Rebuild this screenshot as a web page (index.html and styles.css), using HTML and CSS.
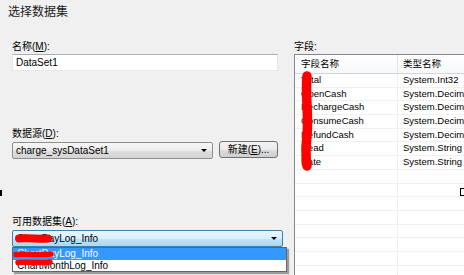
FILE: index.html
```html
<!DOCTYPE html>
<html lang="zh-CN">
<head>
    <meta charset="UTF-8">
    <title>选择数据集</title>
    <link rel="stylesheet" href="styles.css">
</head>
<body>
    <div class="page">
        <div class="title">选择数据集</div>
        <div class="main">
            <div class="left">
                <div class="label">名称(<u>M</u>):</div>
                <div class="textbox">DataSet1</div>

                <div class="label gap">数据源(<u>D</u>):</div>
                <div class="row">
                    <div class="combo src"><span>charge_sysDataSet1</span><i class="arrow"></i></div>
                    <div class="btn">新建(<u>E</u>)...</div>
                </div>

                <div class="label gap">可用数据集(<u>A</u>):</div>
                <div class="combo open">
                    <span>ChartDayLog_Info</span><i class="arrow"></i>
                    <ul class="droplist">
                        <li class="sel">ChartDayLog_Info</li>
                        <li>ChartMonthLog_Info</li>
                    </ul>
                </div>
            </div>

            <div class="right">
                <div class="label">字段:</div>
                <div class="grid">
                    <div class="gh"><div>字段名称</div><div>类型名称</div></div>
                    <div class="gr"><div>Total</div><div>System.Int32</div></div>
                    <div class="gr"><div>OpenCash</div><div>System.Decimal</div></div>
                    <div class="gr"><div>RechargeCash</div><div>System.Decimal</div></div>
                    <div class="gr"><div>ConsumeCash</div><div>System.Decimal</div></div>
                    <div class="gr"><div>RefundCash</div><div>System.Decimal</div></div>
                    <div class="gr"><div>Head</div><div>System.String</div></div>
                    <div class="gr"><div>Date</div><div>System.String</div></div>
                    <div class="gr"><div></div><div></div></div>
                    <div class="gr"><div></div><div></div></div>
                    <div class="gr"><div></div><div></div></div>
                    <div class="gr"><div></div><div></div></div>
                    <div class="gr"><div></div><div></div></div>
                    <div class="gr"><div></div><div></div></div>
                    <div class="gr"><div></div><div></div></div>
                    <div class="gr"><div></div><div></div></div>
                </div>
            </div>
        </div>

        <!-- red marker strokes over the names -->
        <svg class="scribble" width="464" height="275" viewBox="0 0 464 275">
            <g fill="none" stroke="#ff0000" stroke-linecap="round">
                <path d="M307 76 C305 95 309 115 307 135 S306 160 307 166" stroke-width="9.5"/>
                <path d="M19 238.5 C30 237.5 40 239.5 48 238.5" stroke-width="8"/>
                <path d="M16 254.5 C28 253.5 40 255.5 51 254" stroke-width="5.5"/>
                <path d="M18 262.5 C30 261.5 40 263.5 50 262" stroke-width="5.5"/>
            </g>
        </svg>
        <i class="mark-l"></i>
        <i class="mark-r"></i>
    </div>
</body>
</html>
```

FILE: styles.css
```css
body {
    margin: 0;
    background: #f0f0f0;
    font-family: 'Liberation Sans', 'Noto Sans CJK SC', sans-serif;
    color: #000;
    overflow: hidden;
}
.page {
    position: relative;
    width: 464px;
    height: 275px;
    overflow: hidden;
}
.title {
    padding: 4px 0 0 8px;
    font-size: 12px;
    line-height: 16px;
    margin-bottom: 21px;
    color: #1a1a1a;
}
.main {
    display: flex;
}
.left {
    width: 272px;
    margin-left: 12px;
}
.right {
    margin-left: 11px;
    width: 200px;
    flex-shrink: 0;
}
.label {
    font-size: 10px;
    line-height: 12px;
    height: 12px;
    margin-bottom: 1px;
}
.label.gap {
    margin-top: 57px;
    margin-bottom: 2px;
}
.label u {
    text-underline-offset: 1px;
}
.textbox {
    width: 266px;
    height: 17px;
    box-sizing: border-box;
    background: #fff;
    border: 1px solid #e3e9ef;
    border-top-color: #abadb3;
    font-size: 10px;
    line-height: 15px;
    padding-left: 3px;
}
.row {
    display: flex;
    align-items: flex-start;
}
.combo {
    position: relative;
    height: 17px;
    box-sizing: border-box;
    border: 1px solid #8e8f8f;
    border-radius: 2px;
    font-size: 10px;
    line-height: 15px;
    padding-left: 3px;
}
.combo .arrow {
    position: absolute;
    right: 5px;
    top: 6px;
    border-left: 3px solid transparent;
    border-right: 3px solid transparent;
    border-top: 3px solid #000;
}
.combo.src {
    width: 201px;
    background: linear-gradient(#f7f7f7, #ececec 50%, #dedede 51%, #d3d3d3);
}
.combo.open {
    width: 271px;
    border-color: #3c7fb1;
    background: linear-gradient(#e8f5fc, #d9f0fc 50%, #bee6fd 51%, #a7d9f5);
    padding-left: 4px;
}
.btn {
    margin-left: 6px;
    margin-top: -1px;
    width: 59px;
    height: 17px;
    box-sizing: border-box;
    border: 1px solid #707070;
    border-radius: 3px;
    background: linear-gradient(#f2f2f2, #ebebeb 50%, #dddddd 51%, #cfcfcf);
    font-size: 10px;
    line-height: 15px;
    text-align: center;
}
.droplist {
    position: absolute;
    left: -1px;
    top: 16px;
    width: 273px;
    margin: 0;
    padding: 0;
    list-style: none;
    background: #fff;
    border: 1px solid #646464;
    box-shadow: 2px 2px 1px rgba(0, 0, 0, 0.35);
}
.droplist li {
    height: 11.5px;
    line-height: 11px;
    padding-left: 4px;
}
.droplist li.sel {
    background: #3399ff;
    color: #fff;
}
.grid {
    border: 1px solid #828790;
    background: #fff;
    font-size: 9.5px;
}
.gh, .gr {
    display: flex;
}
.gh {
    height: 18px;
    line-height: 18px;
    border-bottom: 1px solid #d5d5d5;
    background: linear-gradient(#fff, #f7f8fa);
}
.gh div:first-child {
    border-right: 1px solid #e3e5e8;
}
.gr {
    height: 13.7px;
    box-sizing: border-box;
    line-height: 12.7px;
    border-bottom: 1px solid #f0f0f0;
}
.gh div, .gr div {
    white-space: nowrap;
    overflow: hidden;
}
.gh div:first-child, .gr div:first-child {
    width: 103px;
    padding-left: 6px;
    box-sizing: border-box;
}
.gr div:first-child {
    border-right: 1px solid #f0f0f0;
}
.gh div:last-child, .gr div:last-child {
    padding-left: 5px;
}
.scribble {
    position: absolute;
    left: 0;
    top: 0;
    pointer-events: none;
}
.mark-l {
    position: absolute;
    left: 0;
    top: 190px;
    width: 2px;
    height: 6px;
    background: #000;
}
.mark-r {
    position: absolute;
    left: 460px;
    top: 188px;
    width: 6px;
    height: 6px;
    border: 1px solid #000;
}
```
